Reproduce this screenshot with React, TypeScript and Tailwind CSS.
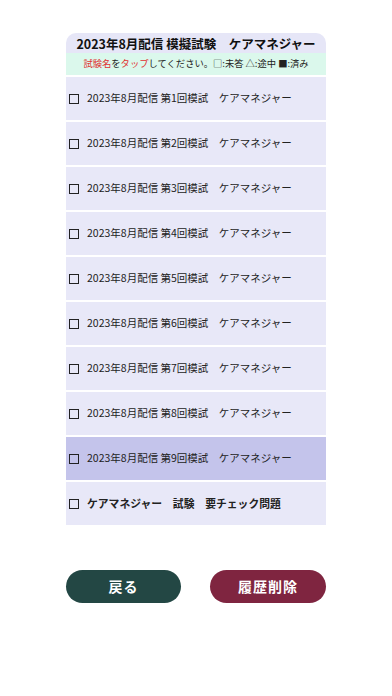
import React from "react";

const font = { fontFamily: '"Noto Sans CJK JP", "Noto Sans", sans-serif' };

export default function App() {
  const rows = [1, 2, 3, 4, 5, 6, 7, 8, 9];
  return (
    <div className="w-[392px] h-[696px] bg-white" style={font}>
      <div className="pt-[33px] px-[66px]">
        <div className="rounded-t-[10px] overflow-hidden">
          <div className="h-[20px] bg-[#e6e6f7] flex items-center justify-center text-[12.5px] font-bold text-[#111] leading-none pt-[3px]">
            2023年8月配信 模擬試験　ケアマネジャー
          </div>
          <div className="h-[22px] bg-[#dbf8ec] flex items-center justify-center text-[9.3px] text-[#222] leading-none">
            <span className="text-[#e03131]">試験名</span>を<span className="text-[#e03131]">タップ</span>してください。□:未答 △:途中 ■:済み
          </div>
        </div>
        <div className="flex flex-col gap-[2px] mt-[2px]">
          {rows.map((n) => (
            <div
              key={n}
              className={`h-[43px] flex items-center pl-[3px] ${n === 9 ? "bg-[#c4c4eb]" : "bg-[#e8e8f8]"}`}
            >
              <span className="w-[10px] h-[10px] border-[1.5px] border-[#222] box-border shrink-0" />
              <span className="ml-[8px] text-[10.5px] text-[#222] leading-none">
                2023年8月配信 第{n}回模試　ケアマネジャー
              </span>
            </div>
          ))}
          <div className="h-[43px] flex items-center pl-[3px] bg-[#e8e8f8]">
            <span className="w-[10px] h-[10px] border-[1.5px] border-[#222] box-border shrink-0" />
            <span className="ml-[8px] text-[10.8px] font-bold text-[#222] leading-none">
              ケアマネジャー　試験　要チェック問題
            </span>
          </div>
        </div>
        <div className="flex justify-between mt-[45px]">
          <button className="w-[115px] h-[33px] rounded-full bg-[#234744] text-white text-[14px] font-bold tracking-[1px]">
            戻る
          </button>
          <button className="w-[116px] h-[33px] rounded-full bg-[#7f2540] text-white text-[14px] font-bold tracking-[1px]">
            履歴削除
          </button>
        </div>
      </div>
    </div>
  );
}
